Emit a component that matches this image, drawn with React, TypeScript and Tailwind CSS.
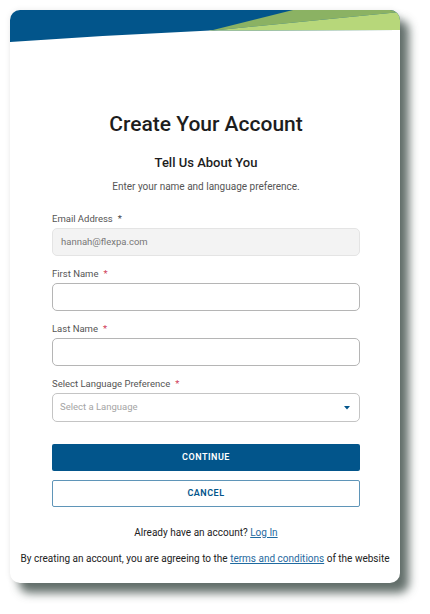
import React from "react";

function Field({ label, required = "red", children }: { label: string; required?: "red" | "grey"; children: React.ReactNode }) {
  return (
    <div className="flex flex-col gap-[2px]">
      <label className="text-[9.5px] leading-[14px] text-[#555]">
        {label}
        <span className={required === "red" ? "ml-[5px] text-[#d0405a]" : "ml-[5px] text-[#444]"}>*</span>
      </label>
      {children}
    </div>
  );
}

export default function App() {
  return (
    <div className="min-h-[614px] w-[430px] bg-white pl-[10px] pt-[10px] font-['Roboto',_'Liberation_Sans',_sans-serif]">
      <div className="flex h-[573px] w-[390px] flex-col overflow-hidden rounded-[10px] bg-white shadow-[9px_10px_10px_rgba(60,75,70,0.8),0_0_6px_rgba(0,0,0,0.08)]">
        <svg width="390" height="32" viewBox="0 0 390 32" className="block shrink-0">
          <path d="M0 0 H390 V20 L200 20.5 Q100 25 0 32 Z" fill="#02558b" />
          <path d="M199 21 L283 0 H390 V2 Z" fill="#8bb263" />
          <path d="M199 21 L390 2 V20 L200 20.5 Z" fill="#b7d77a" />
        </svg>
        <div className="flex flex-1 flex-col pl-[42px] pr-[40px] pt-[68px]">
          <h1 className="text-center text-[21px] font-medium leading-[28px] text-[#1d1d1d]">Create Your Account</h1>
          <h2 className="mt-[15px] text-center text-[13px] font-medium leading-[20px] text-[#1d1d1d]">Tell Us About You</h2>
          <p className="mt-[6px] text-center text-[10px] leading-[16px] text-[#555]">Enter your name and language preference.</p>

          <div className="mt-[17px] flex flex-col gap-[11px]">
            <Field label="Email Address" required="grey">
              <div className="flex h-[28px] items-center rounded-[5px] border border-[#e4e4e4] bg-[#f3f3f3] px-[8px] text-[9.5px] text-[#777]">
                hannah@flexpa.com
              </div>
            </Field>
            <Field label="First Name">
              <input className="h-[28px] rounded-[5px] border border-[#b5b5b5] bg-white px-[8px] text-[9.5px] outline-none" />
            </Field>
            <Field label="Last Name">
              <input className="h-[28px] rounded-[5px] border border-[#b5b5b5] bg-white px-[8px] text-[9.5px] outline-none" />
            </Field>
            <Field label="Select Language Preference">
              <div className="flex h-[29px] items-center justify-between rounded-[5px] border border-[#c4c4c4] bg-white pl-[7px] pr-[9px]">
                <span className="text-[9.5px] text-[#a5a5a5]">Select a Language</span>
                <svg width="6" height="4" viewBox="0 0 6 4">
                  <path d="M0 0 H6 L3 3.5 Z" fill="#02558b" />
                </svg>
              </div>
            </Field>
          </div>

          <button className="mt-[22px] h-[27px] rounded-[2px] bg-[#02558b] text-[9px] font-semibold tracking-[0.5px] text-white">CONTINUE</button>
          <button className="mt-[9px] h-[27px] rounded-[2px] border border-[#5f95b8] bg-white text-[9px] font-semibold tracking-[0.5px] text-[#02558b]">CANCEL</button>

          <p className="mt-[19px] text-center text-[10px] leading-[14px] text-[#222]">
            Already have an account? <span className="text-[#1f6aa0] underline">Log In</span>
          </p>
          <p className="-ml-[42px] -mr-[40px] mt-[12px] whitespace-nowrap text-center text-[10px] leading-[14px] text-[#222]">
            By creating an account, you are agreeing to the <span className="text-[#1f6aa0] underline">terms and conditions</span> of the website
          </p>
        </div>
      </div>
    </div>
  );
}
